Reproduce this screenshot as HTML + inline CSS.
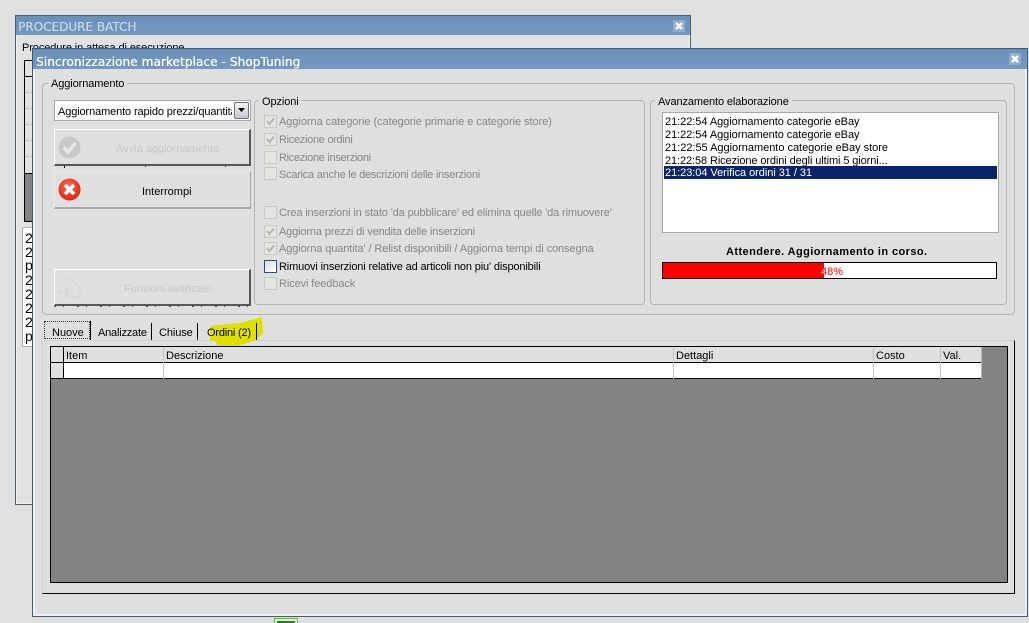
<!DOCTYPE html>
<html><head><meta charset="utf-8">
<style>
html,body{margin:0;padding:0}
body{width:1029px;height:623px;overflow:hidden;position:relative;background:#e0e0e0;font:11px "Liberation Sans",sans-serif;color:#000}
div,span{position:absolute;box-sizing:border-box}
span{white-space:nowrap;line-height:13px;margin-top:1px}
.title{background:linear-gradient(#6a90ba,#7498c0);}
.tt{font:12px "DejaVu Sans",sans-serif;color:#fff;line-height:16px;text-shadow:.3px 0 0 currentColor}
.group{border:1px solid #b4b4b4;border-radius:4px}
.leg{background:#dfdfdf;padding:0 3px;letter-spacing:-.1px}
.cb{left:264px;width:13px;height:13px;background:#e4e4e0;border:1px solid #cbc8bc}
.lb{left:279px;color:#868686;letter-spacing:-.05px}
.btn{left:54px;width:197px;background:#dfdfdf}
.raised{border:solid;border-width:1px 2px 2px 1px;border-color:#fff #585858 #585858 #fff}
.soft{border:solid;border-width:1px 1px 2px 1px;border-color:#e9e9e9 #a8a8a8 #a8a8a8 #e9e9e9}
.log{left:665px;color:#000;letter-spacing:-.05px}
.h{background:#000;height:1px}
.v{background:#000;width:1px}
.cl{background:#c4c4c4;width:1px}
.l2{left:25px;font-size:14px;line-height:14px;margin-top:0}
</style></head><body>

<!-- back window -->
<div style="left:15px;top:15px;width:676px;height:490px;background:#e2e2e2;border:1px solid #4f5f74"></div>
<div style="left:16px;top:16px;width:674px;height:488px;border:1px solid #f2f2f2"></div>
<div class="title" style="left:16px;top:16px;width:674px;height:19px"></div>
<span class="tt" style="left:18px;top:18px;color:#c8d6e6">PROCEDURE BATCH</span>
<svg style="position:absolute;left:673px;top:20px" width="12" height="12"><rect width="12" height="12" fill="#8fadcf"/><path d="M3 3 9 9M9 3 3 9" stroke="#fff" stroke-width="2.4"/></svg>
<span style="left:22px;top:41px;letter-spacing:-.1px">Procedure in attesa di esecuzione</span>
<div style="left:24px;top:60px;width:10px;height:162px;background:#e2e2e2;border:1px solid #000;border-right:0"></div>
<div class="h" style="left:24px;top:76px;width:10px"></div>
<div style="left:25px;top:92px;width:9px;height:1px;background:#c8c8c8"></div>
<div style="left:25px;top:108px;width:9px;height:1px;background:#c8c8c8"></div>
<div style="left:25px;top:124px;width:9px;height:1px;background:#c8c8c8"></div>
<div style="left:25px;top:140px;width:9px;height:1px;background:#c8c8c8"></div>
<div style="left:25px;top:156px;width:9px;height:1px;background:#c8c8c8"></div>
<div style="left:25px;top:173px;width:9px;height:48px;background:#848284;border-top:1px solid #000"></div>
<div class="h" style="left:24px;top:221px;width:10px"></div>
<div style="left:22px;top:227px;width:12px;height:120px;background:#fff;border:1px solid #b0b0b0"></div>
<span class="l2" style="top:231px">2</span>
<span class="l2" style="top:245px">2</span>
<span class="l2" style="top:258px">p</span>
<span class="l2" style="top:273px">2</span>
<span class="l2" style="top:287px">2</span>
<span class="l2" style="top:301px">2</span>
<span class="l2" style="top:315px">2</span>
<span class="l2" style="top:329px">p</span>

<!-- front window -->
<div style="left:32px;top:48px;width:996px;height:569px;background:#dfdfdf;border:1px solid #3d5c80"></div>
<div style="left:33px;top:49px;width:994px;height:567px;border:2px solid #eef0f2"></div>
<div class="title" style="left:33px;top:49px;width:994px;height:20px"></div>
<span class="tt" style="left:36px;top:53px;letter-spacing:.1px">Sincronizzazione marketplace - ShopTuning</span>
<svg style="position:absolute;left:1009px;top:53px" width="12" height="12"><rect width="12" height="12" fill="#8fadcf"/><path d="M3 3 9 9M9 3 3 9" stroke="#fff" stroke-width="2.4"/></svg>

<!-- Aggiornamento group -->
<div class="group" style="left:42px;top:83px;width:973px;height:232px"></div>
<span class="leg" style="left:48px;top:77px">Aggiornamento</span>

<!-- combo -->
<div style="left:54px;top:100px;width:197px;height:21px;background:#fff;border:1px solid #a8a8a8"></div>
<span style="left:58px;top:105px;width:174px;overflow:hidden;letter-spacing:-.12px">Aggiornamento rapido prezzi/quantità</span>
<div style="left:234px;top:102px;width:15px;height:17px;background:linear-gradient(#f4f4f8,#c4c4d4);border:1px solid #6f7078;border-radius:2px"></div>
<svg style="position:absolute;left:238px;top:108px" width="8" height="5"><path d="M0 0H7L3.5 4Z" fill="#000"/></svg>

<!-- buttons -->
<div class="btn raised" style="top:129px;height:37px"></div>
<div style="left:64px;top:166px;width:1px;height:2px;background:#000"></div>
<div style="left:145px;top:166px;width:1px;height:1px;background:#444"></div>
<div style="left:225px;top:166px;width:1px;height:1px;background:#444"></div>
<svg style="position:absolute;left:58px;top:136px" width="23" height="23"><circle cx="11.5" cy="11.5" r="11" fill="#c8c8c8"/><path d="M5.5 11.5 10 16 17.5 7" fill="none" stroke="#e6e6e6" stroke-width="3.5"/></svg>
<span style="left:116px;top:142px;color:#c8c8c8">Avvia aggiornamento</span>

<div class="btn soft" style="top:171px;height:38px"></div>
<svg style="position:absolute;left:58px;top:178px" width="23" height="23"><defs><radialGradient id="r" cx=".45" cy=".35" r=".75"><stop offset="0" stop-color="#ff6a50"/><stop offset="1" stop-color="#d81808"/></radialGradient></defs><circle cx="11.5" cy="11.5" r="11" fill="url(#r)"/><path d="M7 7 16 16M16 7 7 16" stroke="#fff" stroke-width="3.6"/></svg>
<span style="left:142px;top:185px">Interrompi</span>

<div class="btn raised" style="top:269px;height:37px"></div>
<div style="left:54px;top:306px;width:197px;height:1px;background:repeating-linear-gradient(90deg,#555 0 2px,transparent 2px 9px,#555 9px 10px,transparent 10px 23px)"></div>
<svg style="position:absolute;left:58px;top:274px" width="24" height="24"><path d="M8 2 22 13V23H9V17H0" fill="none" stroke="#d2d2d2" stroke-width="1"/></svg>
<span style="left:124px;top:282px;color:#c8c8c8;letter-spacing:-.1px">Funzioni avanzate</span>

<!-- Opzioni -->
<div class="group" style="left:254px;top:100px;width:391px;height:205px"></div>
<span class="leg" style="left:259px;top:95px">Opzioni</span>

<div class="cb" style="top:115px"></div><svg style="position:absolute;left:266px;top:117px" width="9" height="9"><path d="M1 4 3.5 7 8 1.5" fill="none" stroke="#b8b8b0" stroke-width="2"/></svg>
<span class="lb" style="top:115px">Aggiorna categorie (categorie primarie e categorie store)</span>
<div class="cb" style="top:133px"></div><svg style="position:absolute;left:266px;top:135px" width="9" height="9"><path d="M1 4 3.5 7 8 1.5" fill="none" stroke="#b8b8b0" stroke-width="2"/></svg>
<span class="lb" style="top:133px;letter-spacing:-.3px">Ricezione ordini</span>
<div class="cb" style="top:151px"></div>
<span class="lb" style="top:151px;letter-spacing:-.3px">Ricezione inserzioni</span>
<div class="cb" style="top:167px"></div>
<span class="lb" style="top:168px;letter-spacing:-.25px">Scarica anche le descrizioni delle inserzioni</span>
<div class="cb" style="top:206px"></div>
<span class="lb" style="top:206px;letter-spacing:-.13px">Crea inserzioni in stato 'da pubblicare' ed elimina quelle 'da rimuovere'</span>
<div class="cb" style="top:225px"></div><svg style="position:absolute;left:266px;top:227px" width="9" height="9"><path d="M1 4 3.5 7 8 1.5" fill="none" stroke="#b8b8b0" stroke-width="2"/></svg>
<span class="lb" style="top:225px;letter-spacing:-.15px">Aggiorna prezzi di vendita delle inserzioni</span>
<div class="cb" style="top:242px"></div><svg style="position:absolute;left:266px;top:244px" width="9" height="9"><path d="M1 4 3.5 7 8 1.5" fill="none" stroke="#b8b8b0" stroke-width="2"/></svg>
<span class="lb" style="top:242px;letter-spacing:-.1px">Aggiorna quantita' / Relist disponibili / Aggiorna tempi di consegna</span>
<div class="cb" style="top:260px;background:linear-gradient(135deg,#dcdcdc,#fff);border-color:#1c5180"></div>
<span class="lb" style="top:260px;color:#000;letter-spacing:-.15px">Rimuovi inserzioni relative ad articoli non piu' disponibili</span>
<div class="cb" style="top:277px"></div>
<span class="lb" style="top:277px;letter-spacing:-.1px">Ricevi feedback</span>

<!-- Avanzamento -->
<div class="group" style="left:650px;top:100px;width:357px;height:205px"></div>
<span class="leg" style="left:655px;top:95px">Avanzamento elaborazione</span>
<div style="left:662px;top:112px;width:337px;height:121px;background:#fff;border:1px solid #a8a8a8"></div>
<span class="log" style="top:115px">21:22:54 Aggiornamento categorie eBay</span>
<span class="log" style="top:128px">21:22:54 Aggiornamento categorie eBay</span>
<span class="log" style="top:141px;letter-spacing:-.02px">21:22:55 Aggiornamento categorie eBay store</span>
<span class="log" style="top:154px;letter-spacing:-.1px">21:22:58 Ricezione ordini degli ultimi 5 giorni...</span>
<div style="left:664px;top:166px;width:333px;height:13px;background:#0a246a"></div>
<span class="log" style="top:166px;color:#fff">21:23:04 Verifica ordini 31 / 31</span>
<span style="left:726px;top:245px;font-weight:bold;letter-spacing:.42px">Attendere. Aggiornamento in corso.</span>
<div style="left:662px;top:262px;width:335px;height:17px;background:#fff;border:1px solid #000"></div>
<div style="left:663px;top:263px;width:161px;height:15px;background:#f00"></div>
<span style="left:821px;top:265px;color:#f00">48%</span>
<span style="left:821px;top:265px;width:3px;overflow:hidden;color:#fff">48%</span>

<!-- tab panel -->
<div style="left:42px;top:340px;width:973px;height:254px;border:1px solid;border-color:#cfcfcf #000 #000 #cfcfcf"></div>

<!-- highlight -->
<svg style="position:absolute;left:205px;top:312px" width="65" height="44"><path d="M5 14 35 11 57 5 58 21 51 28 36 33 35 38 15 39 11 30 5 28Z" fill="#e0e000"/></svg>

<!-- tabs -->
<div style="left:44px;top:321px;width:46px;height:18px;border:1px dotted #333"></div>
<div class="v" style="left:90px;top:321px;height:19px"></div>
<span style="left:52px;top:326px">Nuove</span>
<span style="left:98px;top:326px;letter-spacing:-.2px">Analizzate</span>
<div class="v" style="left:151px;top:323px;height:17px"></div>
<span style="left:159px;top:326px;letter-spacing:-.1px">Chiuse</span>
<div class="v" style="left:197px;top:323px;height:17px"></div>
<span style="left:207px;top:326px;letter-spacing:-.2px">Ordini (2)</span>
<div class="v" style="left:256px;top:323px;height:17px"></div>

<!-- grid -->
<div style="left:50px;top:346px;width:958px;height:237px;background:#848284;border:1px solid #000"></div>
<div style="left:51px;top:347px;width:930px;height:16px;background:#dfdfdf"></div>
<div style="left:63px;top:363px;width:918px;height:16px;background:#fff"></div>
<div style="left:51px;top:363px;width:12px;height:16px;background:#dfdfdf"></div>
<div class="h" style="left:51px;top:362px;width:931px"></div>
<div class="h" style="left:51px;top:378px;width:931px"></div>
<div class="v" style="left:63px;top:347px;height:32px"></div>
<div class="v" style="left:981px;top:347px;height:32px;background:#b8b8b8"></div>
<div class="cl" style="left:163px;top:347px;height:32px"></div>
<div class="cl" style="left:673px;top:347px;height:32px"></div>
<div class="cl" style="left:873px;top:347px;height:32px"></div>
<div class="cl" style="left:940px;top:347px;height:32px"></div>
<span style="left:66px;top:349px">Item</span>
<span style="left:166px;top:349px">Descrizione</span>
<span style="left:676px;top:349px">Dettagli</span>
<span style="left:876px;top:349px">Costo</span>
<span style="left:943px;top:349px">Val.</span>

<!-- bottom taskbar sliver -->
<div style="left:274px;top:618px;width:24px;height:5px;background:#e4f4d8;border:1px solid #5cc020;border-bottom:0"></div>
<div style="left:277px;top:621px;width:18px;height:2px;background:linear-gradient(90deg,#0a8010,#5a6a5a)"></div>
</body></html>
